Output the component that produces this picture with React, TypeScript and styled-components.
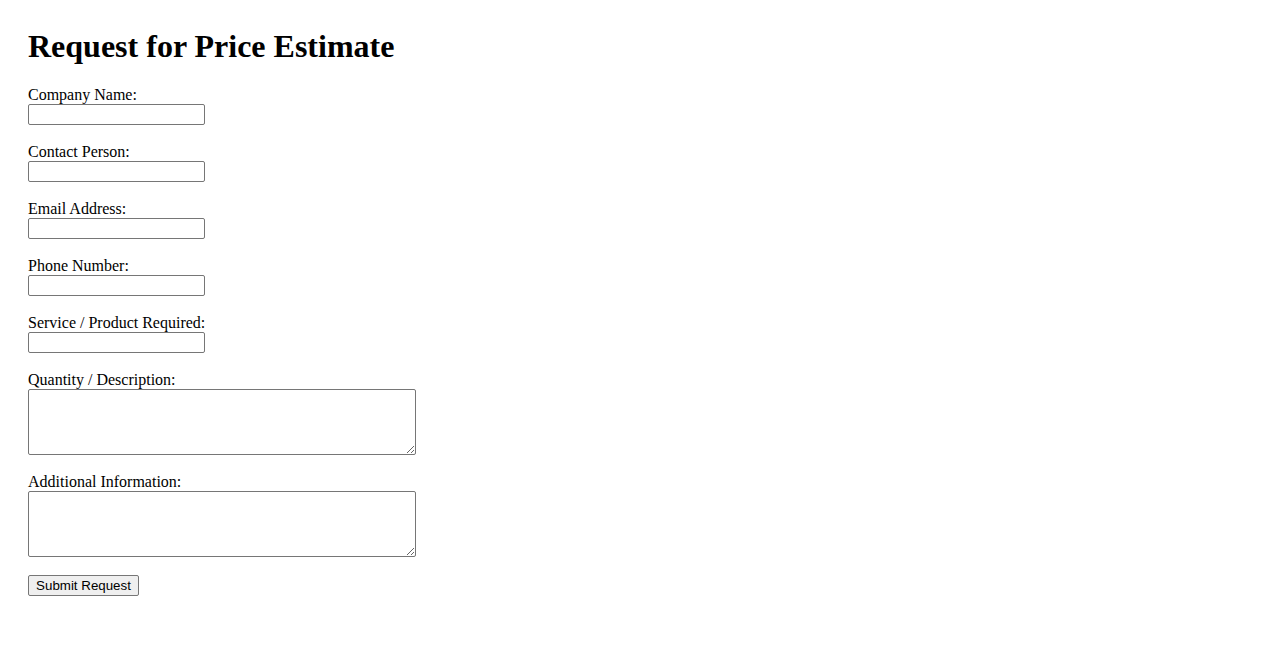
import React from "react";
import styled, { createGlobalStyle } from "styled-components";

const GlobalStyle = createGlobalStyle`
  html, body { margin: 0; padding: 0; background: #ffffff; }
  body {
    font-family: "Liberation Serif", "Times New Roman", serif;
    font-size: 16px;
    color: #000000;
  }
`;

const Page = styled.div`
  padding: 28px 28px 40px 28px;
`;

const Title = styled.h1`
  margin: 0 0 21px 0;
  font-size: 32px;
  font-weight: bold;
  line-height: 36.8px;
`;

const Form = styled.form`
  display: flex;
  flex-direction: column;
  align-items: flex-start;
`;

const Field = styled.div`
  display: flex;
  flex-direction: column;
  align-items: flex-start;
  margin-bottom: 18px;
`;

const Label = styled.label`
  display: block;
  line-height: 18px;
`;

const TextInput = styled.input`
  box-sizing: border-box;
  width: 177px;
  height: 21px;
  margin: 0;
  padding: 1px 2px;
  border: 1px solid #767676;
  border-radius: 2px;
  background: #ffffff;
  font-family: "Liberation Sans", Arial, sans-serif;
  font-size: 13.33px;
`;

const TextArea = styled.textarea`
  box-sizing: border-box;
  width: 388px;
  height: 66px;
  margin: 0;
  padding: 2px;
  border: 1px solid #767676;
  border-radius: 2px;
  background: #ffffff;
  font-family: "Liberation Mono", monospace;
  font-size: 13.33px;
  resize: both;
`;

const SubmitButton = styled.button`
  box-sizing: border-box;
  height: 21px;
  width: 111px;
  margin: 0;
  padding: 1px 6px;
  border: 1px solid #767676;
  border-radius: 2px;
  background: #efefef;
  color: #000000;
  font-family: "Liberation Sans", Arial, sans-serif;
  font-size: 13.33px;
  line-height: normal;
`;

const inputs = [
  { id: "company", label: "Company Name:" },
  { id: "contact", label: "Contact Person:" },
  { id: "email", label: "Email Address:" },
  { id: "phone", label: "Phone Number:" },
  { id: "service", label: "Service / Product Required:" },
];

const areas = [
  { id: "quantity", label: "Quantity / Description:" },
  { id: "info", label: "Additional Information:" },
];

export default function App() {
  return (
    <>
      <GlobalStyle />
      <Page>
        <Title>Request for Price Estimate</Title>
        <Form onSubmit={(e) => e.preventDefault()}>
          {inputs.map((f) => (
            <Field key={f.id}>
              <Label htmlFor={f.id}>{f.label}</Label>
              <TextInput id={f.id} type="text" />
            </Field>
          ))}
          {areas.map((f) => (
            <Field key={f.id}>
              <Label htmlFor={f.id}>{f.label}</Label>
              <TextArea id={f.id} />
            </Field>
          ))}
          <SubmitButton type="submit">Submit Request</SubmitButton>
        </Form>
      </Page>
    </>
  );
}
